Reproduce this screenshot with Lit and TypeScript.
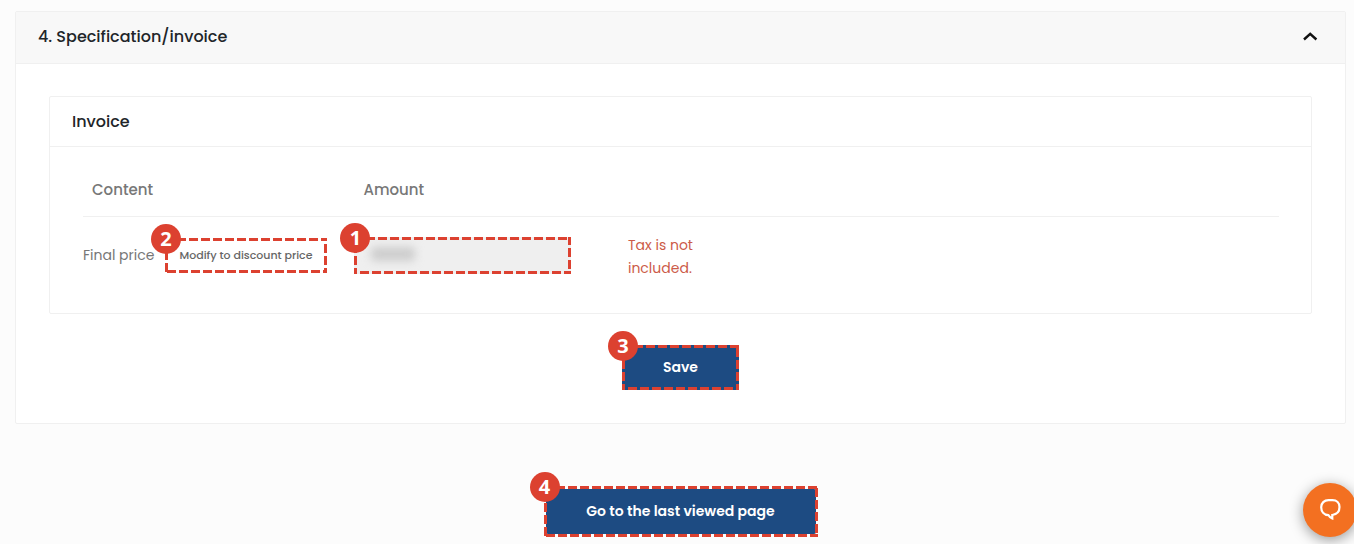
import { LitElement, html, css } from "lit";
import { customElement, property, state } from "lit/decorators.js";

@customElement("step-callout")
class StepCallout extends LitElement {
  @property({ type: Number }) step = 1;

  static styles = css`
    :host {
      display: block;
      position: relative;
    }
    .outline {
      position: absolute;
      inset: 0;
      width: 100%;
      height: 100%;
      overflow: hidden;
      pointer-events: none;
    }
    .dashes {
      fill: none;
      stroke: #dc4130;
      stroke-width: 6;
      stroke-dasharray: 9 3;
    }
    .badge {
      position: absolute;
      top: -14px;
      left: -14px;
      width: 30px;
      height: 30px;
      border-radius: 50%;
      background: #dc4130;
      color: #fff;
      font: 700 20px/30px "Open Sans", "Noto Sans", sans-serif;
      text-align: center;
      pointer-events: none;
    }
  `;

  render() {
    return html`
      <slot></slot>
      <svg class="outline" aria-hidden="true">
        <rect class="dashes" width="100%" height="100%"></rect>
      </svg>
      <span class="badge">${this.step}</span>
    `;
  }
}

@customElement("app-root")
class AppRoot extends LitElement {
  @state() private open = true;

  static styles = css`
    :host {
      display: block;
      box-sizing: border-box;
      min-height: 100vh;
      padding: 11px 8px 7px 15px;
      background: #fcfcfc;
      color: #212529;
      font-family: Poppins, Inter, "Liberation Sans", sans-serif;
      font-size: 14px;
    }
    *, *::before, *::after {
      box-sizing: border-box;
    }
    button, input {
      font-family: inherit;
      margin: 0;
    }
    h2, h3 {
      margin: 0;
      font-weight: 500;
    }
    .panel {
      border: 1px solid #f0f0f0;
      border-radius: 2px;
      background: #fff;
    }
    .toggle {
      display: flex;
      align-items: center;
      justify-content: space-between;
      width: 100%;
      height: 52px;
      padding: 0 27px 2px 22px;
      border: 0;
      border-bottom: 1px solid #f0f0f0;
      background: #f8f8f8;
      color: inherit;
      font-size: 16px;
      font-weight: 500;
      cursor: pointer;
    }
    .body {
      padding: 32px 33px 33px;
    }
    .invoice {
      border: 1px solid #f0f0f0;
      border-radius: 2px;
    }
    .invoice-title {
      padding: 0 22px;
      border-bottom: 1px solid #f0f0f0;
      font-size: 16px;
      line-height: 49px;
    }
    .table-wrap {
      padding: 16px 32px 18px 33px;
    }
    table {
      width: 100%;
      table-layout: fixed;
      border-collapse: collapse;
      color: #777;
    }
    .col {
      width: 22.7%;
    }
    th {
      height: 53px;
      padding: 0 9px;
      border-bottom: 1px solid #f0f0f0;
      font-size: 15px;
      font-weight: 500;
      text-align: left;
    }
    td {
      height: 79px;
      padding: 0;
      vertical-align: middle;
    }
    .price {
      display: flex;
      align-items: center;
      gap: 10px;
      white-space: nowrap;
    }
    .modify {
      display: block;
      width: 162px;
      height: 35px;
      padding: 0;
      border: 0;
      background: #fff;
      color: #666;
      font-size: 11px;
      font-weight: 500;
      cursor: pointer;
    }
    .label {
      width: 72px;
    }
    .amount {
      width: 217px;
    }
    .amount-input {
      display: block;
      width: 100%;
      height: 37px;
      padding: 0 14px;
      border: 0;
      background: #efefef;
    }
    .masked {
      position: absolute;
      top: 10px;
      left: 17px;
      width: 44px;
      height: 14px;
      border-radius: 4px;
      background: #cdcdcd;
      filter: blur(4px);
    }
    .note {
      width: 90px;
      padding: 2px 0 0 2px;
      color: #cc5b49;
      line-height: 23px;
    }
    .actions {
      display: flex;
      justify-content: center;
    }
    .save-row {
      padding-top: 31px;
    }
    .back-row {
      padding-top: 62px;
    }
    .primary {
      display: block;
      border: 0;
      border-radius: 2px;
      background: #1d4b82;
      color: #fff;
      font-size: 14px;
      font-weight: 600;
      cursor: pointer;
    }
    .save {
      width: 117px;
      height: 45px;
    }
    .back-frame {
      padding: 3px 2px;
    }
    .back {
      width: 270px;
      height: 45px;
    }
    .chat {
      position: fixed;
      right: -3px;
      bottom: 7px;
      display: grid;
      place-items: center;
      width: 54px;
      height: 54px;
      padding: 0;
      border: 0;
      border-radius: 50%;
      background: #f37021;
      box-shadow: 0 3px 14px rgba(0, 0, 0, 0.4);
      cursor: pointer;
    }
  `;

  render() {
    return html`
      <main>
        <section class="panel">
          <h2>
            <button class="toggle" aria-expanded=${this.open} @click=${() => (this.open = !this.open)}>
              4. Specification/invoice
              <svg width="16" height="10" viewBox="0 0 16 10" fill="none" stroke="#111" stroke-width="2.4" aria-hidden="true">
                <path d="M2 7.500 8.200 1.800l6.200 5.700"></path>
              </svg>
            </button>
          </h2>
          ${this.open ? this.renderBody() : null}
        </section>
        <div class="actions back-row">
          <step-callout class="back-frame" step="4">
            <button class="primary back">Go to the last viewed page</button>
          </step-callout>
        </div>
      </main>
      <button class="chat" aria-label="Chat">
        <svg width="24" height="24" viewBox="0 0 24 24" fill="none" stroke="#fff" stroke-width="2.200" stroke-linejoin="miter" aria-hidden="true">
          <path d="M10.500 2.200h4c4.200 0 7 2.900 7 6.900 0 4.300-2.800 7.300-7.200 7.900v3.400c-1.700-.7-3-1.700-3.800-3.200C6 17 3.200 13.500 3.200 9.200c0-4.100 3-7 7.300-7Z"></path>
        </svg>
      </button>
    `;
  }

  private renderBody() {
    return html`
      <div class="body">
        <section class="invoice">
          <h3 class="invoice-title">Invoice</h3>
          <div class="table-wrap">
            <table>
              <colgroup>
                <col class="col" />
                <col class="col" />
                <col />
              </colgroup>
              <thead>
                <tr>
                  <th scope="col">Content</th>
                  <th scope="col" colspan="2">Amount</th>
                </tr>
              </thead>
              <tbody>
                <tr>
                  <td>
                    <div class="price">
                      <label class="label" for="amount">Final price</label>
                      <step-callout step="2">
                        <button class="modify">Modify to discount price</button>
                      </step-callout>
                    </div>
                  </td>
                  <td>
                    <step-callout class="amount" step="1">
                      <input class="amount-input" id="amount" type="text" disabled />
                      <span class="masked"></span>
                    </step-callout>
                  </td>
                  <td><div class="note">Tax is not included.</div></td>
                </tr>
              </tbody>
            </table>
          </div>
        </section>
        <div class="actions save-row">
          <step-callout step="3">
            <button class="primary save">Save</button>
          </step-callout>
        </div>
      </div>
    `;
  }
}
